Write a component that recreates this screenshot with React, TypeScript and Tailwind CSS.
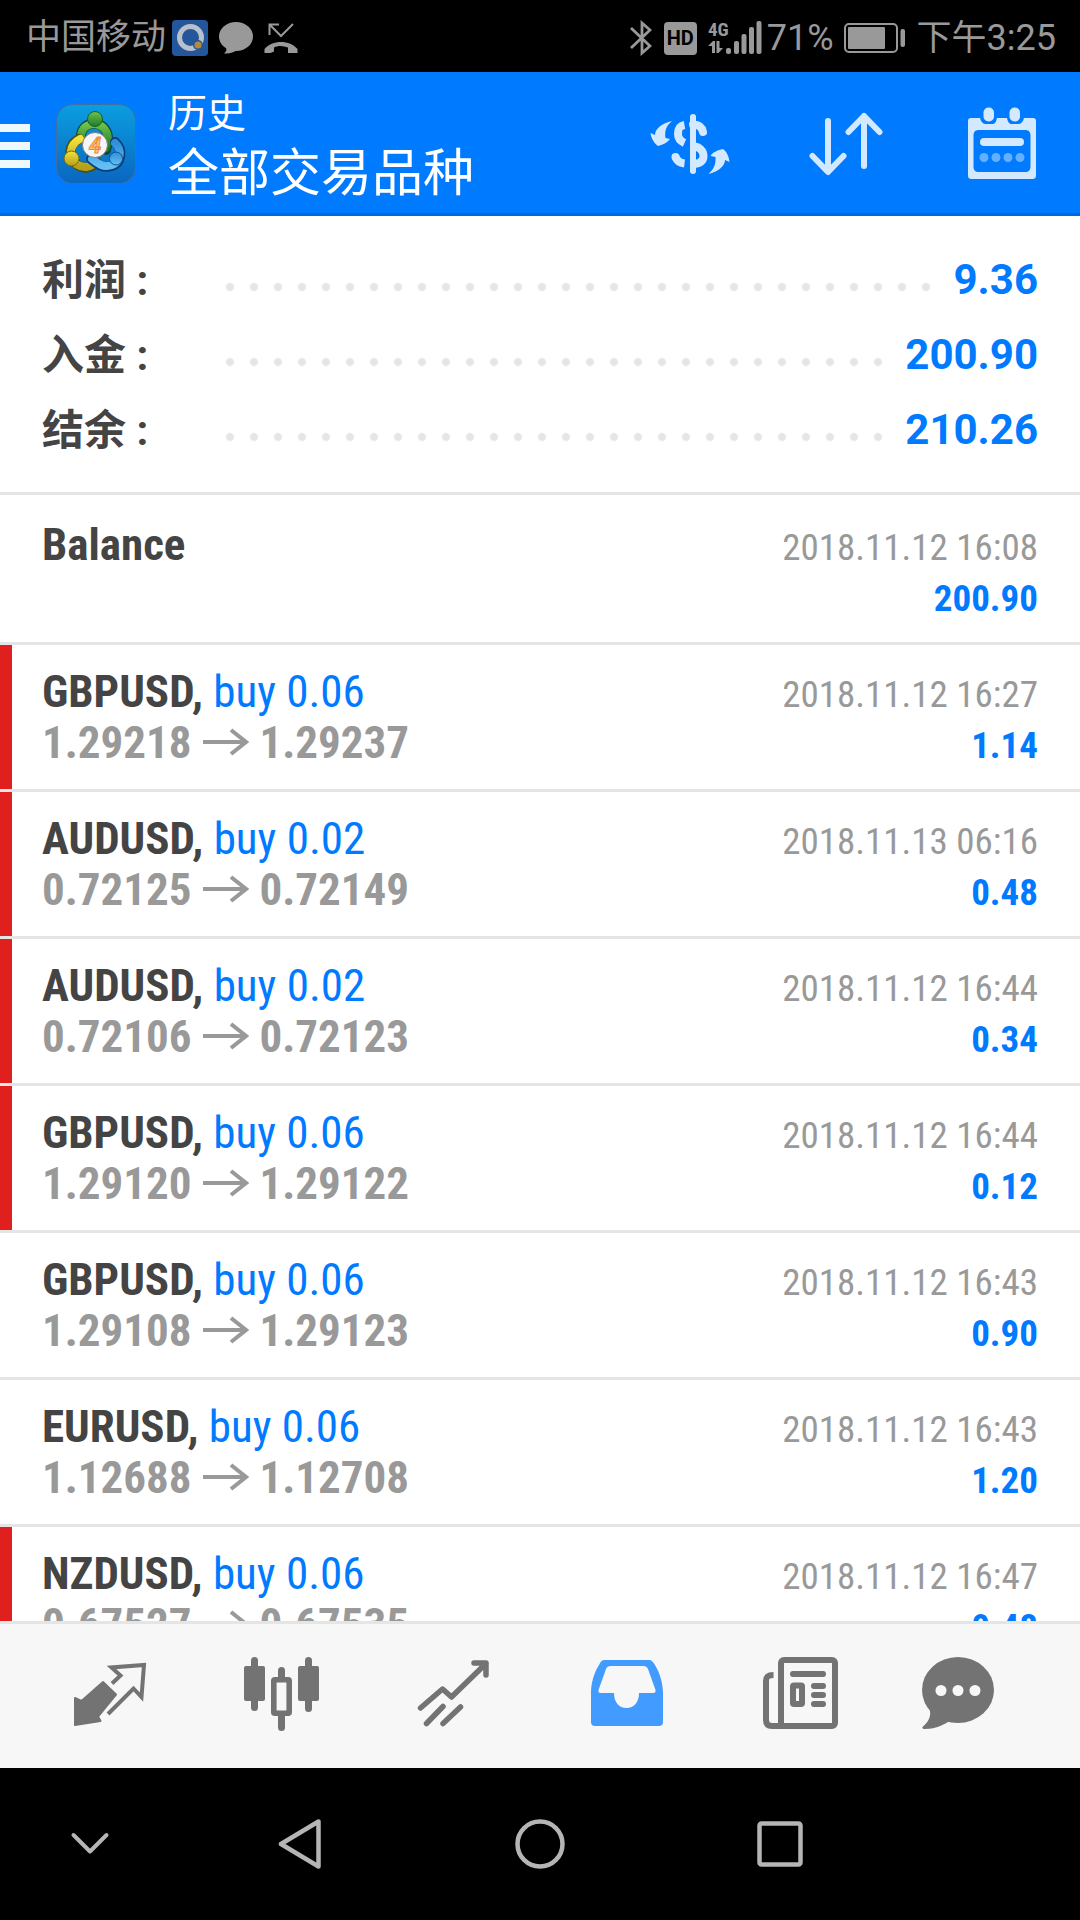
import React from 'react';

interface Deal {
    id: number;
    symbol: string;
    action?: string;
    open?: string;
    close?: string;
    time: string;
    profit: string;
    marked?: boolean;
}

interface SummaryRowProps {
    label: string;
    value: string;
}

const summary: SummaryRowProps[] = [
    {label: '利润', value: '9.36'},
    {label: '入金', value: '200.90'},
    {label: '结余', value: '210.26'},
];

const deals: Deal[] = [
    {id: 1, symbol: 'GBPUSD', action: 'buy 0.06', open: '1.29218', close: '1.29237', time: '2018.11.12 16:27', profit: '1.14', marked: true},
    {id: 2, symbol: 'AUDUSD', action: 'buy 0.02', open: '0.72125', close: '0.72149', time: '2018.11.13 06:16', profit: '0.48', marked: true},
    {id: 3, symbol: 'AUDUSD', action: 'buy 0.02', open: '0.72106', close: '0.72123', time: '2018.11.12 16:44', profit: '0.34', marked: true},
    {id: 4, symbol: 'GBPUSD', action: 'buy 0.06', open: '1.29120', close: '1.29122', time: '2018.11.12 16:44', profit: '0.12', marked: true},
    {id: 5, symbol: 'GBPUSD', action: 'buy 0.06', open: '1.29108', close: '1.29123', time: '2018.11.12 16:43', profit: '0.90'},
    {id: 6, symbol: 'EURUSD', action: 'buy 0.06', open: '1.12688', close: '1.12708', time: '2018.11.12 16:43', profit: '1.20'},
    {id: 7, symbol: 'NZDUSD', action: 'buy 0.06', open: '0.67527', close: '0.67535', time: '2018.11.12 16:47', profit: '0.48', marked: true},
];

const StatusBar: React.FC = () => (
    <div className="flex h-[72px] shrink-0 items-center justify-between bg-black pl-[26px] pr-6 pt-1 text-4xl text-[#999]">
        <div className="flex items-center">
            <span className="mr-[6px] text-[35px]">中国移动</span>
            <svg className="mr-[11px]" width="36" height="36" viewBox="0 0 36 36">
                <rect width="36" height="36" rx="4" fill="#24569b"/>
                <circle cx="18.500" cy="17.500" r="11" fill="none" stroke="#b9c0cc" strokeWidth="5"/>
                <circle cx="26" cy="25" r="5" fill="#24569b"/>
                <circle cx="26" cy="25" r="3.500" fill="#b98a35"/>
            </svg>
            <svg className="mr-[11px]" width="34" height="34" viewBox="0 0 34 34" fill="#999">
                <ellipse cx="17" cy="15.500" rx="17" ry="14.500"/>
                <path d="M6 25 C8 28 8 30 5 32.500 C11 33 16 31 20 28Z"/>
            </svg>
            <svg width="34" height="34" viewBox="0 0 34 34">
                <path d="M29 3 L17 15 L6 4 M5.500 14 V3.500 H15" fill="none" stroke="#999" strokeWidth="2"/>
                <path d="M0.500 32 V28 C8 18.500 26 18.500 33.500 28 V32 H24 V26.500 C19 24.500 14 24.500 10 26.500 V30.500 L6.500 32Z" fill="#999"/>
            </svg>
        </div>
        <div className="flex items-center">
            <svg className="mr-3" width="22" height="36" viewBox="0 0 22 36" fill="none" stroke="#999" strokeWidth="2.800">
                <path d="M1 8 L20 26 L12 33 V3 L20 10 L1 28"/>
            </svg>
            <span className="mr-[11px] flex h-[33px] w-[33px] items-center justify-center rounded bg-[#999] text-xl font-bold text-black">HD</span>
            <svg className="mr-[5px]" width="54" height="36" viewBox="0 0 54 36" fill="#999">
                <text x="0" y="16" fontSize="19" fontWeight="700" fontFamily="'Roboto Condensed', 'Liberation Sans Narrow', sans-serif">4G</text>
                <path d="M0 26 L5 21 H7 V33 H4 V26Z M8.500 21 H11.500 V28 H15 L10.500 33 H8.500Z"/>
                <rect x="18" y="28" width="5" height="6" rx="2"/>
                <rect x="26" y="21" width="5" height="13" rx="2"/>
                <rect x="33.500" y="14" width="5" height="20" rx="2"/>
                <rect x="41" y="7" width="5" height="27" rx="2"/>
                <rect x="48.500" y="1" width="5" height="33" rx="2"/>
            </svg>
            <span className="mr-[10px]">71%</span>
            <svg className="mr-[11px]" width="62" height="30" viewBox="0 0 62 30">
                <rect x="1" y="1" width="52" height="28" rx="4" fill="none" stroke="#999" strokeWidth="2"/>
                <rect x="4" y="4" width="37" height="22" rx="1" fill="#999"/>
                <rect x="56.500" y="6" width="4.500" height="18" rx="2" fill="#999"/>
            </svg>
            <span><span className="text-[35px]">下午</span>3:25</span>
        </div>
    </div>
);

const AppLogo: React.FC = () => (
    <svg className="ml-[26px] shrink-0" width="80" height="80" viewBox="0 0 80 80">
        <defs>
            <linearGradient id="logoBg" x1="0" y1="0" x2="0" y2="1">
                <stop offset="0" stopColor="#0a9ee0"/>
                <stop offset="1" stopColor="#0a66c0"/>
            </linearGradient>
            <linearGradient id="logoGreen" x1="0" y1="0" x2="0" y2="1">
                <stop offset="0" stopColor="#6fc24a"/>
                <stop offset="1" stopColor="#1d7a2c"/>
            </linearGradient>
            <linearGradient id="logoYellow" x1="0" y1="0" x2="0" y2="1">
                <stop offset="0" stopColor="#f3e13c"/>
                <stop offset="1" stopColor="#b5a01e"/>
            </linearGradient>
            <linearGradient id="logoBlue" x1="0" y1="0" x2="0" y2="1">
                <stop offset="0" stopColor="#2f8fd8"/>
                <stop offset="1" stopColor="#63c0f5"/>
            </linearGradient>
        </defs>
        <rect x="0.500" y="0.500" width="79" height="79" rx="16" fill="url(#logoBg)" stroke="#3f6fa5"/>
        <g fill="none" strokeLinecap="round">
            <path d="M25 34 C23 15 54 13 52 38 L50 46" stroke="#0c4a3a" strokeWidth="10"/>
            <path d="M25 33 C25 15 53 15 52 37 L50 44" stroke="url(#logoGreen)" strokeWidth="8"/>
            <path d="M23 35 C11 41 13 54 20 60 C28 66 36 64 41 58" stroke="#4c5212" strokeWidth="10"/>
            <path d="M24 35 C12 41 13 54 20 60 C28 65 35 63 40 58" stroke="url(#logoYellow)" strokeWidth="8"/>
            <path d="M59 38 C68 46 65 59 56 62 C46 65 40 59 35 55" stroke="#0b3f7c" strokeWidth="10"/>
            <path d="M59 39 C67 46 64 58 56 61 C47 64 41 59 36 55" stroke="url(#logoBlue)" strokeWidth="8"/>
        </g>
        <circle cx="39" cy="15" r="7.500" fill="url(#logoGreen)" stroke="#14642a"/>
        <circle cx="15.500" cy="54.500" r="7.500" fill="url(#logoYellow)" stroke="#6e6a14"/>
        <circle cx="60" cy="54.500" r="6.500" fill="url(#logoBlue)" stroke="#13508c"/>
        <circle cx="39" cy="41" r="12.500" fill="#f6f6fa" stroke="#8a7f70"/>
        <text x="39" y="49" textAnchor="middle" fontSize="22" fontWeight="700" fontStyle="italic" fill="#fbc48a" stroke="#f08a2c">4</text>
    </svg>
);

const Header: React.FC = () => (
    <header className="flex h-36 shrink-0 items-center bg-[#007aff] text-white shadow-[inset_0_-3px_0_#0069dc]">
        <button aria-label="菜单" className="flex w-[30px] shrink-0 flex-col gap-[10px] pt-[3px]">
            <span className="h-2 bg-[#f0f8ff]"></span>
            <span className="h-2 bg-[#f0f8ff]"></span>
            <span className="h-2 bg-[#f0f8ff]"></span>
        </button>
        <AppLogo/>
        <div className="ml-8 min-w-0 flex-1 pt-1">
            <p className="text-[39px] leading-14">历史</p>
            <h1 className="text-[51px] leading-16">全部交易品种</h1>
        </div>
        <button aria-label="货币" className="flex w-[156px] justify-center">
            <svg width="80" height="60" viewBox="0 0 80 60">
                <path d="M22 7 C12 9 5 15 5 21 L0.500 19 C1 24 4 29 8 32 C12 31 17 29 20 25 L15.500 24 C14.500 17 16 12 22 7Z" fill="#d3e9ff"/>
                <path d="M58.500 60 C68 58 75 52 75 46 L79.500 48 C79 43 77 38 73 35 C68 36 63 38 60.500 42 L65.500 43 C66 50 64 55 58.500 60Z" fill="#d3e9ff"/>
                <g fill="none" stroke="#d3e9ff" strokeWidth="8">
                    <path d="M34.500 11 C29 12 28 15 28 20 C28 24 30 27 34.500 29"/>
                    <path d="M25.500 43 C27 47 30 49 34.500 49.500"/>
                    <path d="M43 3 V57" strokeWidth="6" strokeLinecap="round"/>
                    <path d="M43 10.500 C49 10.500 52 13 53 18" strokeLinecap="round"/>
                    <path d="M43 32 C50 33 53.500 37 53.500 42 C53.500 47 50 50 43 50"/>
                </g>
                <circle cx="25.500" cy="43" r="4" fill="#d3e9ff"/>
            </svg>
        </button>
        <button aria-label="排序" className="flex w-[156px] justify-center">
            <svg width="76" height="64" viewBox="0 0 76 64" fill="none" stroke="#d3e9ff" strokeWidth="6" strokeLinecap="round" strokeLinejoin="round">
                <path d="M20 9 V59 M4.500 44 L20 60 L35.500 44"/>
                <path d="M56 54 V4 M40.500 20 L56 4 L71.500 20"/>
            </svg>
        </button>
        <button aria-label="日期" className="flex w-[156px] justify-center">
            <svg width="72" height="76" viewBox="0 0 72 76">
                <path fillRule="evenodd" fill="#d3e9ff" d="M5 12 H14 C15 16 17 18 20 18 H26 C29 18 30 16 31 12 H41 C42 16 43 18 46 18 H52 C55 18 57 16 58 12 H67 C69 12 70 13 70 15 V69 C70 72 69 73 66 73 H6 C3 73 2 72 2 69 V15 C2 13 3 12 5 12Z M13 24 C9 24 7.500 26 7.500 30 V60 C7.500 64 9 66 13 66 H59 C63 66 64.500 64 64.500 60 V30 C64.500 26 63 24 59 24Z"/>
                <rect x="17.500" y="1.500" width="10.500" height="14" rx="5" fill="#d3e9ff"/>
                <rect x="43.500" y="1.500" width="10.500" height="14" rx="5" fill="#d3e9ff"/>
                <rect x="14" y="32" width="44" height="8" rx="4" fill="#d3e9ff"/>
                <g fill="#64affe">
                    <circle cx="18" cy="51.500" r="4.500"/>
                    <circle cx="30" cy="51.500" r="4.500"/>
                    <circle cx="42" cy="51.500" r="4.500"/>
                    <circle cx="54" cy="51.500" r="4.500"/>
                </g>
            </svg>
        </button>
    </header>
);

const SummaryRow: React.FC<SummaryRowProps> = ({label, value}) => (
    <div className="flex h-[75px] items-center text-[42px] font-bold">
        <dt className="w-44 shrink-0 pt-[2px] text-[#444]">{label} :</dt>
        <dd className="flex flex-1 items-center gap-[14px] text-[#007aff]">
            <span className="mt-[14px] h-6 flex-1 bg-[radial-gradient(circle,#e5e5e5_3px,transparent_5px)] bg-[length:24px_24px] bg-repeat-x"></span>
            {value}
        </dd>
    </div>
);

const ArrowRight: React.FC = () => (
    <svg className="mx-[11px]" width="46" height="30" viewBox="0 0 46 30" fill="none" stroke="#999" strokeWidth="4">
        <path d="M0 14 H43 M28 2 L43 14 L28 26"/>
    </svg>
);

const DealRow: React.FC<{ deal: Deal }> = ({deal}) => (
    <li className="flex h-[147px] shrink-0 border-b-3 border-[#e5e5e5]">
        <span className={deal.marked ? 'w-3 bg-[#e01f1f]' : 'w-3'}></span>
        <div className="flex flex-1 items-baseline justify-between pl-[30px] pr-[42px] pt-[21px]">
            <div className="text-[45px] leading-[51px]">
                <p>
                    <span className="font-bold text-[#444]">{deal.symbol}{deal.action && ','}</span>
                    {deal.action && <span className="text-[#007aff]"> {deal.action}</span>}
                </p>
                {deal.open && (
                    <p className="flex items-center font-bold text-[#999]">
                        {deal.open}
                        <ArrowRight/>
                        {deal.close}
                    </p>
                )}
            </div>
            <div className="text-right text-[37px] leading-[51px]">
                <p className="text-[#999]">{deal.time}</p>
                <p className="font-bold text-[#007aff]">{deal.profit}</p>
            </div>
        </div>
    </li>
);

const TabBar: React.FC = () => (
    <nav className="grid h-[147px] shrink-0 grid-cols-[173fr_173fr_173fr_173fr_173fr_144fr] items-center justify-items-center border-t-3 border-[#e5e5e5] bg-[#f7f7f7] pl-[21px] pr-[50px]">
        <button aria-label="行情">
            <svg width="80" height="80" viewBox="0 0 80 80">
                <path d="M7 42 L13.500 45 L35 26 L48 38.500 L30 60.500 L32.500 65 L7 69Z" fill="#737373" stroke="#737373" strokeWidth="2" strokeLinejoin="round"/>
                <path d="M44 27.500 L52.500 19.500 L43.500 11.500 L76 9 L73.500 41 L65.500 32.500 L40 58" fill="none" stroke="#737373" strokeWidth="4"/>
            </svg>
        </button>
        <button aria-label="图表">
            <svg width="80" height="80" viewBox="0 0 80 80" fill="#737373">
                <rect x="10" y="1" width="7" height="54" rx="3.500"/>
                <rect x="3" y="10" width="21" height="35" rx="2"/>
                <rect x="64" y="1" width="7" height="55" rx="3.500"/>
                <rect x="57" y="10" width="21" height="35" rx="2"/>
                <rect x="37" y="11" width="7" height="14" rx="3.500"/>
                <rect x="37" y="57" width="7" height="18" rx="3.500"/>
                <rect x="32.800" y="23.800" width="15.400" height="33.400" rx="1" fill="none" stroke="#737373" strokeWidth="5.600"/>
            </svg>
        </button>
        <button aria-label="交易">
            <svg width="80" height="80" viewBox="0 0 80 80" fill="none" stroke="#737373" strokeWidth="5.500" strokeLinecap="round" strokeLinejoin="round">
                <path d="M6.500 52 L28.500 33 L37.500 41 L72 7.500 M60 7 H72 V19"/>
                <path d="M12.500 67.500 L29 50.500 M29 67.500 L46.500 51"/>
            </svg>
        </button>
        <button aria-label="历史" aria-current="page">
            <svg width="80" height="80" viewBox="0 0 80 80">
                <path fillRule="evenodd" fill="#429cff" d="M18 4 H62 C65 4 66 6 68 9 C73 17 76 28 76 37 V66 A4 4 0 0 1 72 70 H8 A4 4 0 0 1 4 66 V37 C4 27 7 17 12 9 C14 5 15 4 18 4Z M24 10 C21 10 20 11 19 13 L11.500 34 C11 36 12 37 14 37 H27 C27 46 32 52 39.500 52 C47 52 52 46 52 37 H66 C68 37 69 36 68.500 34 L61 13 C60 11 59 10 56 10Z"/>
            </svg>
        </button>
        <button aria-label="新闻">
            <svg width="80" height="80" viewBox="0 0 80 80" fill="none" stroke="#737373" strokeWidth="6">
                <rect x="21" y="4" width="54" height="66" rx="3"/>
                <path d="M13.500 19 C8 19 6 21 6 25 V64 C6 68 8 70 12 70 H24"/>
                <path d="M33 18 H63 M54 30 H63 M54 39 H63 M54 48 H63" strokeLinecap="round"/>
                <rect x="33" y="29.500" width="9" height="18.500" rx="1"/>
            </svg>
        </button>
        <button aria-label="聊天">
            <svg width="80" height="80" viewBox="0 0 80 80" fill="#737373">
                <ellipse cx="40" cy="34" rx="36" ry="33"/>
                <path d="M8 48 C15 55 13 64 4.500 71 C4 72.500 5 73 7 73 C17 73 23 70 30 66 L40 60Z"/>
                <g fill="#f7f7f7">
                    <circle cx="23" cy="34.500" r="5.500"/>
                    <circle cx="40" cy="34.500" r="5.500"/>
                    <circle cx="57" cy="34.500" r="5.500"/>
                </g>
            </svg>
        </button>
    </nav>
);

const SystemBar: React.FC = () => (
    <div className="grid h-[152px] shrink-0 grid-cols-[3fr_4fr_4fr_4fr_3fr] items-center justify-items-center bg-black">
        <button aria-label="收起">
            <svg width="50" height="50" viewBox="0 0 50 50" fill="none" stroke="#b5b5b5" strokeWidth="4" strokeLinecap="round" strokeLinejoin="round">
                <path d="M8.500 16 L25 32.500 L41.500 16"/>
            </svg>
        </button>
        <button aria-label="返回">
            <svg width="50" height="50" viewBox="0 0 50 50" fill="none" stroke="#b5b5b5" strokeWidth="4.500" strokeLinejoin="round">
                <path d="M43.500 2.500 V47.500 L6 25Z"/>
            </svg>
        </button>
        <button aria-label="主页">
            <svg width="50" height="50" viewBox="0 0 50 50" fill="none" stroke="#b5b5b5" strokeWidth="4.500">
                <circle cx="25" cy="25" r="22.500"/>
            </svg>
        </button>
        <button aria-label="最近任务">
            <svg width="50" height="50" viewBox="0 0 50 50" fill="none" stroke="#b5b5b5" strokeWidth="4.500">
                <rect x="4.500" y="4.500" width="41" height="41" rx="2"/>
            </svg>
        </button>
    </div>
);

const App: React.FC = () => {
    return (
        <div className="flex h-screen flex-col bg-white font-[Roboto,'Noto_Sans_CJK_SC',sans-serif]">
            <StatusBar/>
            <Header/>
            <main className="flex min-h-0 flex-1 flex-col overflow-hidden">
                <dl className="shrink-0 border-b-3 border-[#e5e5e5] px-[42px] pb-[25px] pt-[26px]">
                    {summary.map((row) => <SummaryRow key={row.label} {...row}/>)}
                </dl>
                <ul className="flex flex-col pt-[3px] font-['Roboto_Condensed','Liberation_Sans_Narrow',sans-serif]">
                    <DealRow deal={{id: 0, symbol: 'Balance', time: '2018.11.12 16:08', profit: '200.90'}}/>
                    {deals.map((deal) => <DealRow key={deal.id} deal={deal}/>)}
                </ul>
            </main>
            <TabBar/>
            <SystemBar/>
        </div>
    );
};

export default App;
